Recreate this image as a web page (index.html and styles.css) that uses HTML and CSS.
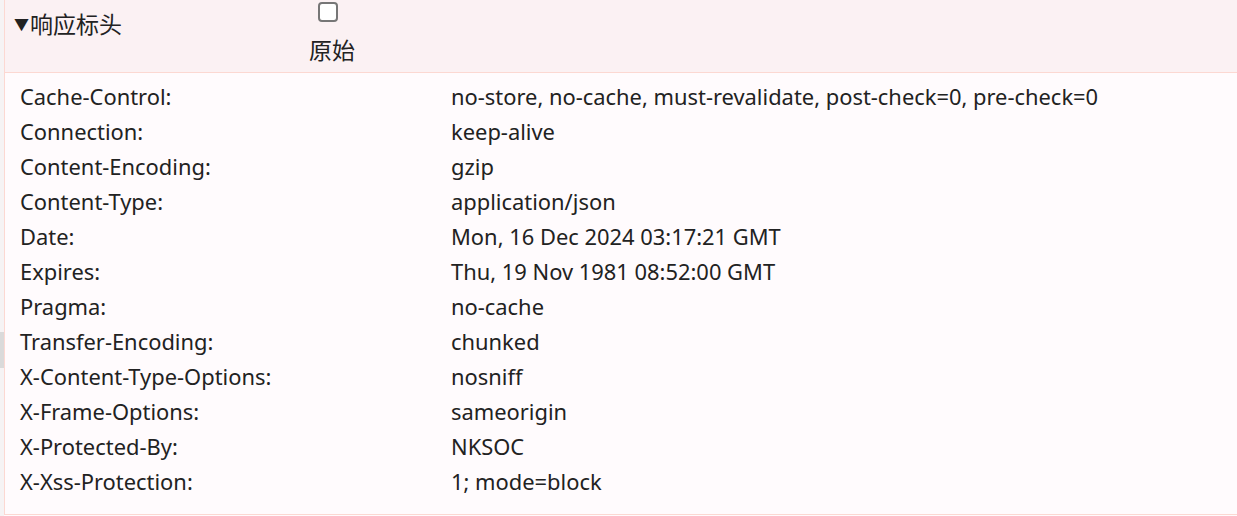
FILE: index.html
```html
<!DOCTYPE html>
<html lang="zh">
<head>
<meta charset="utf-8">
<title>响应标头</title>
<link rel="stylesheet" href="styles.css">
</head>
<body>
<div class="page">
  <div class="gutter"><div class="thumb"></div></div>
  <section class="panel">
    <header class="panel-head">
      <div class="title"><span class="caret">▼</span>响应标头</div>
      <label class="raw">
        <span class="box"></span>
        <span class="raw-text">原始</span>
      </label>
    </header>
    <div class="rows">
      <div class="k">Cache-Control:</div><div class="v">no-store, no-cache, must-revalidate, post-check=0, pre-check=0</div>
      <div class="k">Connection:</div><div class="v">keep-alive</div>
      <div class="k">Content-Encoding:</div><div class="v">gzip</div>
      <div class="k">Content-Type:</div><div class="v">application/json</div>
      <div class="k">Date:</div><div class="v">Mon, 16 Dec 2024 03:17:21 GMT</div>
      <div class="k">Expires:</div><div class="v">Thu, 19 Nov 1981 08:52:00 GMT</div>
      <div class="k">Pragma:</div><div class="v">no-cache</div>
      <div class="k">Transfer-Encoding:</div><div class="v">chunked</div>
      <div class="k">X-Content-Type-Options:</div><div class="v">nosniff</div>
      <div class="k">X-Frame-Options:</div><div class="v">sameorigin</div>
      <div class="k">X-Protected-By:</div><div class="v">NKSOC</div>
      <div class="k">X-Xss-Protection:</div><div class="v">1; mode=block</div>
    </div>
  </section>
</div>
</body>
</html>
```

FILE: styles.css
```css
html, body {
  margin: 0;
  padding: 0;
  background: #fffbfd;
}
body {
  font-family: "Noto Sans", "Noto Sans CJK SC", sans-serif;
  color: #222;
}
.page {
  display: flex;
  width: 1237px;
  height: 516px;
}
.gutter {
  width: 4px;
  flex: none;
  background: #f6f3f4;
}
.thumb {
  margin-top: 332px;
  height: 36px;
  background: #dadada;
}
.panel {
  flex: 1;
  height: 514px;
  border-left: 1px solid #fcd8d2;
  border-bottom: 1px solid #fcd8d2;
  background: #fffbfd;
  display: flex;
  flex-direction: column;
}
.panel-head {
  height: 73px;
  box-sizing: border-box;
  border-bottom: 1px solid #fcd8d2;
  background: #fbf1f3;
  display: flex;
  align-items: flex-start;
}
.title {
  font-size: 23px;
  line-height: 48px;
  padding-left: 9px;
  width: 288px;
  flex: none;
}
.caret {
  font-size: 15px;
  display: inline-block;
  vertical-align: 3px;
  margin-right: 1px;
}
.raw {
  display: flex;
  flex-direction: column;
  align-items: center;
  padding-top: 2px;
  width: 60px;
}
.box {
  box-sizing: border-box;
  width: 20px;
  height: 20px;
  border: 2px solid #767676;
  border-radius: 4px;
  background: #fff;
  margin-left: -8px;
}
.raw-text {
  font-size: 23px;
  line-height: 30px;
  margin-top: 13px;
}
.rows {
  display: grid;
  grid-template-columns: 431px 1fr;
  grid-auto-rows: 35px;
  padding: 6px 0 0 15px;
  font-size: 21.9px;
  line-height: 35px;
}
```
